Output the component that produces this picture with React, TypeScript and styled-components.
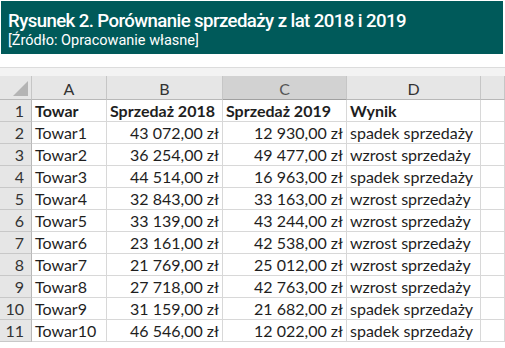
import React from "react";
import styled, { createGlobalStyle } from "styled-components";

const GlobalStyle = createGlobalStyle`
  html, body {
    margin: 0;
    padding: 0;
    background: #fff;
  }
`;

const rows = [
  ["Towar1", "43 072,00 zł", "12 930,00 zł", "spadek sprzedaży"],
  ["Towar2", "36 254,00 zł", "49 477,00 zł", "wzrost sprzedaży"],
  ["Towar3", "44 514,00 zł", "16 963,00 zł", "spadek sprzedaży"],
  ["Towar4", "32 843,00 zł", "33 163,00 zł", "wzrost sprzedaży"],
  ["Towar5", "33 139,00 zł", "43 244,00 zł", "wzrost sprzedaży"],
  ["Towar6", "23 161,00 zł", "42 538,00 zł", "wzrost sprzedaży"],
  ["Towar7", "21 769,00 zł", "25 012,00 zł", "wzrost sprzedaży"],
  ["Towar8", "27 718,00 zł", "42 763,00 zł", "wzrost sprzedaży"],
  ["Towar9", "31 159,00 zł", "21 682,00 zł", "spadek sprzedaży"],
  ["Towar10", "46 546,00 zł", "12 022,00 zł", "spadek sprzedaży"],
];

const columns = ["A", "B", "C", "D", ""];

const App: React.FC = () => {
  return (
    <Page>
      <GlobalStyle />
      <Banner>
        <Title>Rysunek 2. Porównanie sprzedaży z lat 2018 i 2019</Title>
        <Source>[Źródło: Opracowanie własne]</Source>
      </Banner>
      <Sheet>
        <TopStrip />
        <Grid>
          <Corner>
            <CornerMark />
          </Corner>
          {columns.map((c, i) => (
            <ColHead key={i} selected={c === "C"}>
              {c}
            </ColHead>
          ))}

          <RowHead>1</RowHead>
          <Cell bold>Towar</Cell>
          <Cell bold>Sprzedaż 2018</Cell>
          <Cell bold>Sprzedaż 2019</Cell>
          <Cell bold>Wynik</Cell>
          <Cell />

          {rows.map((r, i) => (
            <React.Fragment key={i}>
              <RowHead>{i + 2}</RowHead>
              <Cell>{r[0]}</Cell>
              <Cell right>{r[1]}</Cell>
              <Cell right>{r[2]}</Cell>
              <Cell>{r[3]}</Cell>
              <Cell />
            </React.Fragment>
          ))}
        </Grid>
      </Sheet>
    </Page>
  );
};

const Page = styled.div`
  width: 505px;
  height: 348px;
  overflow: hidden;
  display: flex;
  flex-direction: column;
`;

const Banner = styled.div`
  margin: 1px 2px 0 1px;
  height: 53px;
  background: #005a5a;
  color: #fff;
  padding: 9px 0 0 7px;
  box-sizing: border-box;
  font-family: Roboto, "Liberation Sans", sans-serif;
  display: flex;
  flex-direction: column;
`;

const Title = styled.div`
  font-size: 19px;
  font-weight: 500;
  line-height: 22px;
  letter-spacing: -0.6px;
  transform: scaleX(0.98);
  transform-origin: left center;
  white-space: nowrap;
`;

const Source = styled.div`
  margin-top: 1px;
  font-size: 14.5px;
  line-height: 16px;
  white-space: nowrap;
`;

const Sheet = styled.div`
  margin-top: 13px;
  border-top: 1px solid #dcdcdc;
  display: flex;
  flex-direction: column;
`;

const TopStrip = styled.div`
  height: 8px;
  background: #f3f3f3;
`;

const Grid = styled.div`
  display: grid;
  grid-template-columns: 32px 75px 116px 124px 134px 1fr;
  grid-template-rows: 24px repeat(11, 22px);
  font-family: Lato, "Open Sans", sans-serif;
  font-size: 16px;
  color: #1e1e1e;
`;

const Corner = styled.div`
  background: #e6e6e6;
  border-right: 1px solid #c6c6c6;
  border-bottom: 1px solid #b8b8b8;
  position: relative;
`;

const CornerMark = styled.div`
  position: absolute;
  right: 3px;
  bottom: 3px;
  width: 0;
  height: 0;
  border-left: 15px solid transparent;
  border-bottom: 15px solid #b4b4b4;
`;

const ColHead = styled.div<{ selected?: boolean }>`
  display: flex;
  align-items: center;
  justify-content: center;
  background: ${(p) => (p.selected ? "#d2d2d2" : "#e6e6e6")};
  color: ${(p) => (p.selected ? "#555" : "#333")};
  border-right: 1px solid #c6c6c6;
  border-bottom: 1px solid ${(p) => (p.selected ? "#a0a0a0" : "#b8b8b8")};
  padding-top: 1px;
`;

const RowHead = styled.div`
  display: flex;
  align-items: center;
  justify-content: flex-end;
  padding-right: 7px;
  background: #e6e6e6;
  color: #333;
  border-right: 1px solid #b8b8b8;
  border-bottom: 1px solid #c8c8c8;
`;

const Cell = styled.div<{ bold?: boolean; right?: boolean }>`
  display: flex;
  align-items: center;
  justify-content: ${(p) => (p.right ? "flex-end" : "flex-start")};
  padding: 0 3px 0 3px;
  font-weight: ${(p) => (p.bold ? 700 : 400)};
  border-right: 1px solid #d8d8d8;
  border-bottom: 1px solid #d8d8d8;
  white-space: nowrap;
  overflow: hidden;
`;

export default App;
